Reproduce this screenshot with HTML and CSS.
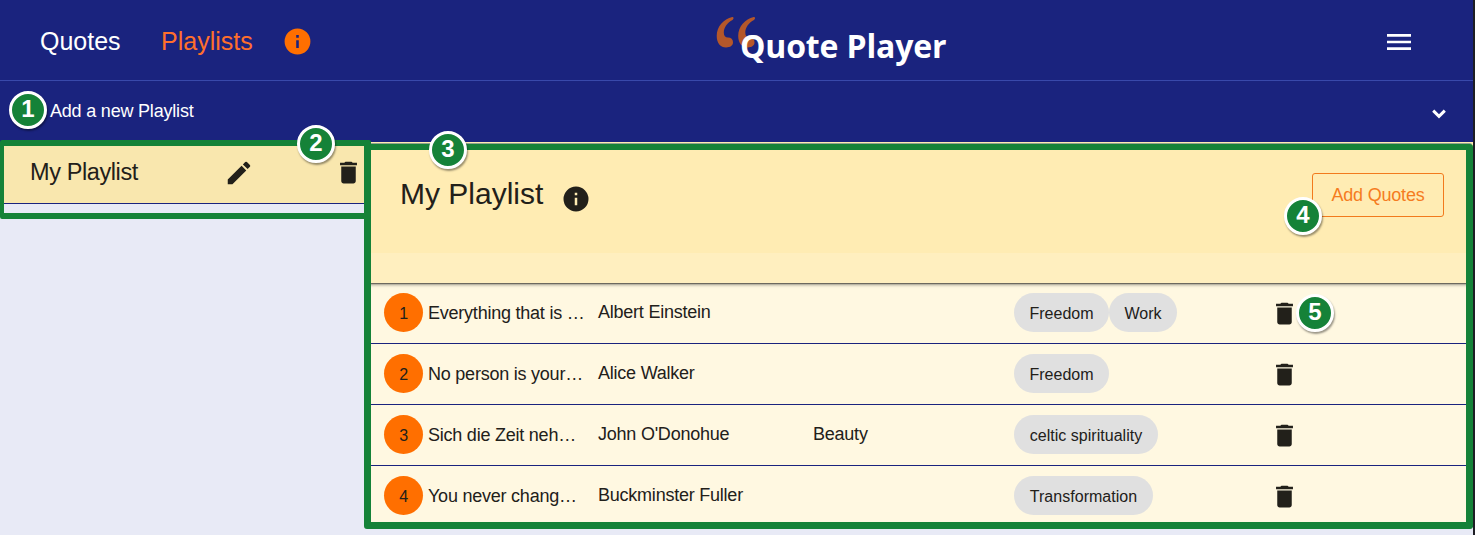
FILE: index.html
```html
<!DOCTYPE html>
<html lang="en">
<head>
<meta charset="utf-8">
<title>Quote Player</title>
<link rel="stylesheet" href="styles.css">
</head>
<body>
<svg class="defs" aria-hidden="true">
  <symbol id="trash" viewBox="0 0 24 24"><path d="M6 19c0 1.1.9 2 2 2h8c1.1 0 2-.9 2-2V7H6v12zM19 4h-3.500l-1-1h-5l-1 1H5v2h14V4z"/></symbol>
  <symbol id="info" viewBox="0 0 24 24"><path d="M12 2a10 10 0 1 0 0 20a10 10 0 0 0 0-20zm1 15h-2v-6h2v6zm0-8h-2V7h2v2z"/></symbol>
  <symbol id="swoosh" viewBox="0 0 18 32"><path d="M16.300 1C7.500 3 0.700 10.500 0.700 20C0.700 27 4.500 31.500 10 31.500C14.500 31.500 17 29.500 17 26.300C17 23.200 15 21.600 12 21.600C9.300 21.600 7.800 20 7.800 16.500C7.800 11 11.500 6.500 16.500 3.900C18 3 17.800 0.700 16.300 1z"/></symbol>
</svg>
<div class="app">
  <header class="topbar">
    <nav class="nav">
      <a class="link">Quotes</a>
      <a class="link active">Playlists</a>
      <svg class="nav-info"><use href="#info"/></svg>
    </nav>
    <div class="logo">
      <svg class="logo-mark" viewBox="0 0 40 32"><use href="#swoosh" width="18" height="32"/><use href="#swoosh" x="21.500" width="18" height="32"/></svg>
      <span class="logo-text">Quote Player</span>
    </div>
    <svg class="burger" viewBox="0 0 24 24"><path d="M3 18h18v-2H3v2zm0-5h18v-2H3v2zm0-7v2h18V6H3z"/></svg>
  </header>
  <section class="expander">
    <span>Add a new Playlist</span>
    <svg class="chevron" viewBox="0 0 14 10"><path d="M1.200 1.700L7 7.300L12.800 1.700"/></svg>
  </section>
  <div class="content">
    <aside class="sidebar">
      <div class="playlist">
        <span class="playlist-name">My Playlist</span>
        <svg class="edit" viewBox="0 0 24 24"><path d="M3 17.250V21h3.750L17.810 9.940l-3.750-3.750L3 17.250zM20.710 7.040a1 1 0 0 0 0-1.410l-2.340-2.340a1 1 0 0 0-1.410 0l-1.830 1.830 3.750 3.750 1.830-1.830z"/></svg>
        <svg class="trash"><use href="#trash"/></svg>
      </div>
    </aside>
    <main class="main">
      <div class="heading">
        <h1 class="title">My Playlist</h1>
        <svg class="title-info"><use href="#info"/></svg>
        <button class="add">Add Quotes</button>
      </div>
      <div class="subheading"></div>
      <div class="rows">
        <div class="row"><span class="num">1</span><span class="quote">Everything that is …</span><span class="author">Albert Einstein</span><span class="topic"></span><span class="tags"><span class="chip">Freedom</span><span class="chip work">Work</span></span><svg class="trash"><use href="#trash"/></svg></div>
        <div class="row"><span class="num">2</span><span class="quote">No person is your…</span><span class="author">Alice Walker</span><span class="topic"></span><span class="tags"><span class="chip">Freedom</span></span><svg class="trash"><use href="#trash"/></svg></div>
        <div class="row"><span class="num">3</span><span class="quote">Sich die Zeit neh…</span><span class="author">John O'Donohue</span><span class="topic">Beauty</span><span class="tags"><span class="chip celtic">celtic spirituality</span></span><svg class="trash"><use href="#trash"/></svg></div>
        <div class="row"><span class="num">4</span><span class="quote">You never chang…</span><span class="author">Buckminster Fuller</span><span class="topic"></span><span class="tags"><span class="chip transform">Transformation</span></span><svg class="trash"><use href="#trash"/></svg></div>
      </div>
    </main>
  </div>
</div>
<div class="frame frame-main"></div>
<div class="frame frame-side"></div>
<span class="badge b1">1</span>
<span class="badge b2">2</span>
<span class="badge b3">3</span>
<span class="badge b4">4</span>
<span class="badge b5">5</span>
</body>
</html>
```
FILE: styles.css
```css
* { box-sizing: border-box; }
body {
  margin: 0; width: 1475px; height: 535px; overflow: hidden; position: relative;
  background: #1d1e24; color: #22201a;
  font-family: "Liberation Sans", Arial, sans-serif;
}
svg { display: block; fill: currentColor; flex: none; }
.defs { display: none; }
.app { width: 1473px; height: 535px; background: #e8eaf6; overflow: hidden; }

.topbar {
  height: 81px; background: #1a237e; border-bottom: 1px solid #3949ab; color: #fff;
  display: grid; grid-template-columns: 716px 1fr auto; align-items: center; padding-right: 58px;
}
.nav { display: flex; align-items: center; padding-left: 40px; height: 80px; padding-top: 2px; }
.link { font-size: 25px; line-height: 30px; width: 121px; white-space: nowrap; }
.link.active { color: #ff6f2c; }
.nav-info { width: 31px; height: 31px; color: #ff6f00; }
.logo { display: flex; height: 80px; padding-top: 16px; }
.logo-mark { width: 40px; height: 32px; fill: #b5572a; }
.logo-text {
  font: bold 32px/40px "Open Sans", "Noto Sans", sans-serif;
  margin: 10px 0 0 -16px; white-space: nowrap; z-index: 1; letter-spacing: -0.150px;
}
.burger { width: 32px; height: 32px; margin-top: 4px; }

.expander {
  height: 61px; background: #1a237e; color: #fff; font-size: 18px; letter-spacing: -0.200px;
  display: flex; align-items: center; justify-content: space-between; padding: 0 27px 0 50px;
}
.chevron { width: 14px; height: 10px; margin-top: 5px; fill: none; stroke: #fff; stroke-width: 3; }

.content { display: flex; }
.sidebar { width: 368px; }
.playlist {
  height: 62px; background: #f9e7ae; border-bottom: 1px solid #1a237e;
  display: grid; grid-template-columns: 194px 110px auto; align-items: center; padding-left: 30px;
}
.playlist-name { font-size: 23.500px; letter-spacing: -0.400px; margin-top: -1px; }
.edit { width: 30px; height: 30px; }
.trash { width: 29px; height: 29px; }
.main { flex: 1; min-width: 0; }
.heading {
  height: 111px; background: #ffecb3; display: flex; align-items: flex-start;
  padding: 31px 29px 0 32px;
}
.title { margin: 3px 18px 0 0; font-weight: normal; font-size: 30px; line-height: 35px; }
.title-info { width: 30px; height: 30px; margin-top: 11px; }
.add {
  margin-left: auto; width: 132px; height: 44px; padding: 0; background: none;
  border: 1px solid #f27a1d; border-radius: 3px; color: #f57c1f;
  font: 18px "Liberation Sans", Arial, sans-serif; letter-spacing: -0.200px;
}
.subheading {
  height: 30px; background: #ffefbf; position: relative;
  box-shadow: 0 3px 3px -1px rgba(0, 0, 0, .35), 0 1px 1px rgba(0, 0, 0, .4);
  clip-path: inset(0 0 -6px 0);
}
.row {
  height: 61px; background: #fff8e1; border-bottom: 1px solid #1a237e; font-size: 18px;
  display: grid; grid-template-columns: 44px 170px 215px 201px 256px auto;
  align-items: center; padding-left: 16px; letter-spacing: -0.230px; white-space: nowrap;
}
.num {
  width: 39px; height: 39px; border-radius: 50%; background: #ff6f00;
  display: grid; place-items: center; font-size: 16px; padding-top: 2px; margin-top: -1px;
}
.author, .topic { margin-top: -1px; }
.tags { display: flex; margin-top: -1px; }
.chip {
  width: 95px; height: 39px; border-radius: 20px; background: #e0e0e0;
  display: grid; place-items: center; font-size: 16px; letter-spacing: 0.030px; padding-top: 2px;
}
.work { width: 68px; }
.celtic { width: 144px; }
.transform { width: 139px; }

.frame { position: absolute; border: solid #158238; }
.frame-side { left: 0; top: 140px; width: 371px; height: 79px; border-width: 6px 7px 6px 4px; border-radius: 2px; }
.frame-main {
  left: 364px; top: 144px; width: 1109px; height: 385px; border-width: 6px 7px 7px; border-radius: 3px;
  box-shadow: 0 -2px 0 -1px #93a58e;
}
.badge {
  position: absolute; width: 38px; height: 38px; border-radius: 50%;
  background: #158238; border: 3px solid #fff; color: #fff;
  font-weight: bold; font-size: 24px; line-height: 30px; text-align: center;
  box-shadow: 1px 2px 2px rgba(0, 0, 0, .4);
}
.b1 { left: 9px; top: 91px; }
.b2 { left: 297px; top: 125px; }
.b3 { left: 429px; top: 131px; }
.b4 { left: 1284px; top: 197px; }
.b5 { left: 1296px; top: 294px; }
```
